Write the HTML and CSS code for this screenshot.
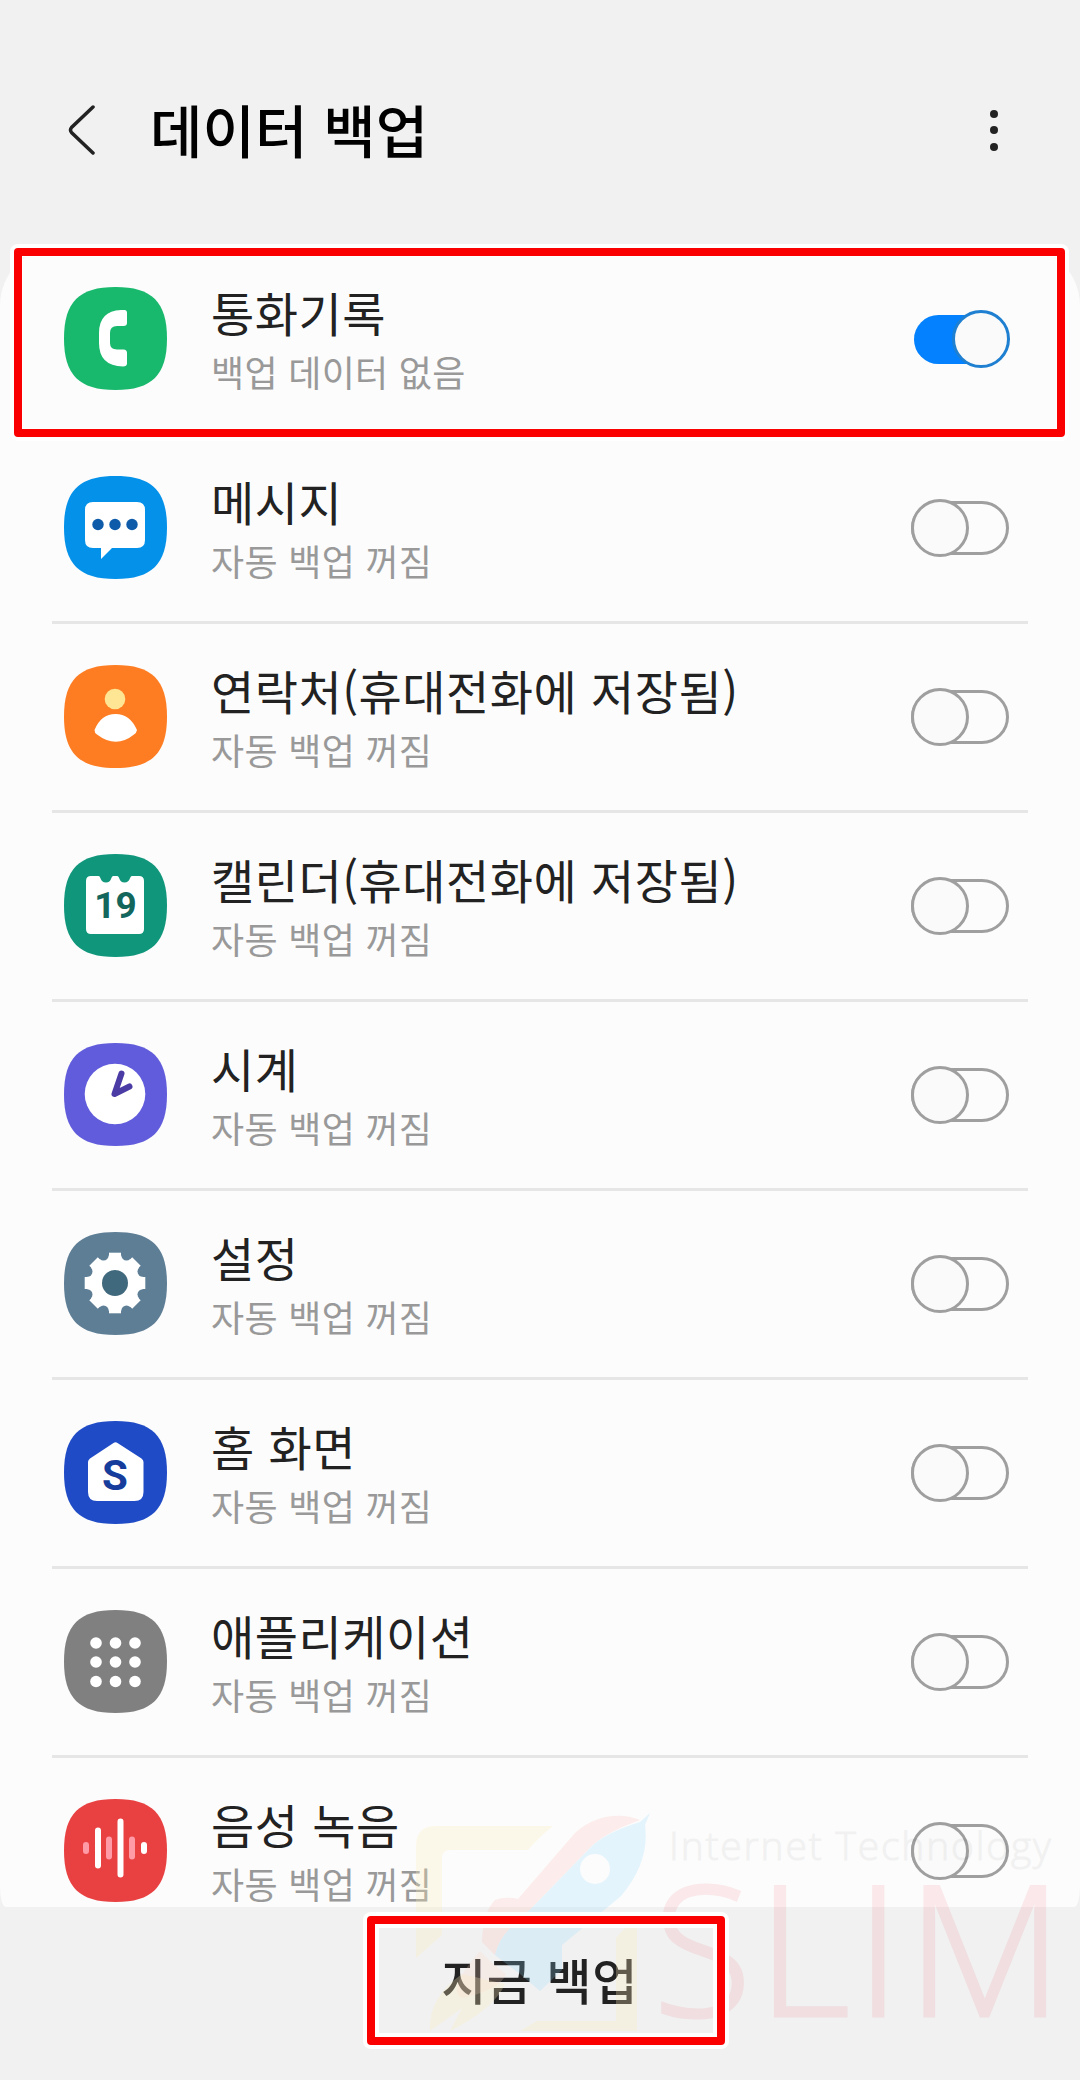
FILE: index.html
```
<!DOCTYPE html>
<html lang="ko">
<head>
  <meta charset="UTF-8" />
  <meta name="viewport" content="width=device-width, initial-scale=1.0"/>
  <title>데이터 백업</title>
  <link rel="stylesheet" href="styles.css">
</head>
<body>

  <svg class="defs" width="0" height="0">
    <symbol id="tile" viewBox="0 0 103 103"><path d="M51.5 0C88 0 103 15 103 51.5S88 103 51.5 103 0 88 0 51.5 15 0 51.5 0Z"/></symbol>
  </svg>

  <header class="header">
    <svg class="back" viewBox="0 0 28 50"><path d="M25 2L3.500 22.500Q1.500 25 3.500 27.500L25 48"/></svg>
    <h1>데이터 백업</h1>
    <div class="more"><i></i><i></i><i></i></div>
  </header>

  <main class="list">
    <div class="item marked">
      <svg class="icon" viewBox="0 0 103 103">
        <use href="#tile" fill="#18b86d"/>
        <path fill="#fff" d="M57 23H60.500Q63 23 63 26V36Q63 39 59.500 39H53Q46 39 46 46V56Q46 62.500 53 62.500H59.500Q63 62.500 63 66V76.500Q63 79.500 59 79.500Q35 79 35 56V46Q35 24 57 23Z"/>
      </svg>
      <div class="text"><div class="name">통화기록</div><div class="desc">백업 데이터 없음</div></div>
      <div class="switch on"></div>
    </div>

    <div class="item">
      <svg class="icon" viewBox="0 0 103 103">
        <use href="#tile" fill="#0391ea"/>
        <path fill="#fff" d="M29 26H73Q81 26 81 34V64Q81 72 73 72H48L37 83V72H29Q21 72 21 64V34Q21 26 29 26Z"/>
        <g fill="#0d5ba9"><circle cx="34" cy="48.500" r="5.700"/><circle cx="51" cy="48.500" r="5.700"/><circle cx="68" cy="48.500" r="5.700"/></g>
      </svg>
      <div class="text"><div class="name">메시지</div><div class="desc">자동 백업 꺼짐</div></div>
      <div class="switch"></div>
    </div>

    <div class="item">
      <svg class="icon" viewBox="0 0 103 103">
        <use href="#tile" fill="#ff7d22"/>
        <circle cx="51" cy="34" r="10.300" fill="#ffe695"/>
        <path fill="#fff" d="M30.500 65Q37 49 51.500 49T73 65Q72.500 68 70 69.500Q52 84 33 69.500Q30.500 68 30.500 65Z"/>
      </svg>
      <div class="text"><div class="name">연락처(휴대전화에 저장됨)</div><div class="desc">자동 백업 꺼짐</div></div>
      <div class="switch"></div>
    </div>

    <div class="item">
      <svg class="icon" viewBox="0 0 103 103">
        <use href="#tile" fill="#0f967b"/>
        <path fill="#fff" d="M27 22H34.500C37 22 36 28.500 42 28.500S46.500 22 49.500 22H53C56 22 54.500 28.500 60.500 28.500S65.500 22 68 22H75Q80 22 80 27V75Q80 80 75 80H27Q22 80 22 75V27Q22 22 27 22Z"/>
        <text class="day" x="51.500" y="64" text-anchor="middle">19</text>
      </svg>
      <div class="text"><div class="name">캘린더(휴대전화에 저장됨)</div><div class="desc">자동 백업 꺼짐</div></div>
      <div class="switch"></div>
    </div>

    <div class="item">
      <svg class="icon" viewBox="0 0 103 103">
        <use href="#tile" fill="#615cdb"/>
        <circle cx="51" cy="51" r="30.300" fill="#fff"/>
        <path d="M57.500 30.500L50.500 51L65.500 43.500" fill="none" stroke="#4a3ba5" stroke-width="6" stroke-linecap="round" stroke-linejoin="round"/>
      </svg>
      <div class="text"><div class="name">시계</div><div class="desc">자동 백업 꺼짐</div></div>
      <div class="switch"></div>
    </div>

    <div class="item">
      <svg class="icon" viewBox="0 0 103 103">
        <use href="#tile" fill="#5e7e96"/>
        <circle cx="51" cy="51" r="28.500" fill="#fff"/>
        <g fill="#fff"><rect x="45" y="20.700" width="12" height="60.600"/><rect x="45" y="20.700" width="12" height="60.600" transform="rotate(45 51 51)"/><rect x="45" y="20.700" width="12" height="60.600" transform="rotate(90 51 51)"/><rect x="45" y="20.700" width="12" height="60.600" transform="rotate(135 51 51)"/></g>
        <g fill="#5e7e96">
          <circle cx="62.500" cy="23.300" r="5.200"/><circle cx="78.700" cy="39.500" r="5.200"/><circle cx="78.700" cy="62.500" r="5.200"/><circle cx="62.500" cy="78.700" r="5.200"/>
          <circle cx="39.500" cy="78.700" r="5.200"/><circle cx="23.300" cy="62.500" r="5.200"/><circle cx="23.300" cy="39.500" r="5.200"/><circle cx="39.500" cy="23.300" r="5.200"/>
        </g>
        <circle cx="51" cy="51" r="13" fill="#41697d"/>
      </svg>
      <div class="text"><div class="name">설정</div><div class="desc">자동 백업 꺼짐</div></div>
      <div class="switch"></div>
    </div>

    <div class="item">
      <svg class="icon" viewBox="0 0 103 103">
        <use href="#tile" fill="#1f4bc6"/>
        <path fill="#fff" d="M49.500 22Q51.500 20.500 53.500 22L77.500 37.500Q79.500 39 79.500 41V71Q79.500 80 70.500 80H33Q24 80 24 71V41Q24 39 26 37.500Z"/>
        <text class="home" x="51" y="69" text-anchor="middle">S</text>
      </svg>
      <div class="text"><div class="name">홈 화면</div><div class="desc">자동 백업 꺼짐</div></div>
      <div class="switch"></div>
    </div>

    <div class="item">
      <svg class="icon" viewBox="0 0 103 103">
        <use href="#tile" fill="#808080"/>
        <g fill="#fff">
          <circle cx="32" cy="33" r="5.800"/><circle cx="51.500" cy="33" r="5.800"/><circle cx="71" cy="33" r="5.800"/>
          <circle cx="32" cy="52" r="5.800"/><circle cx="51.500" cy="52" r="5.800"/><circle cx="71" cy="52" r="5.800"/>
          <circle cx="32" cy="71.500" r="5.800"/><circle cx="51.500" cy="71.500" r="5.800"/><circle cx="71" cy="71.500" r="5.800"/>
        </g>
      </svg>
      <div class="text"><div class="name">애플리케이션</div><div class="desc">자동 백업 꺼짐</div></div>
      <div class="switch"></div>
    </div>

    <div class="item">
      <svg class="icon" viewBox="0 0 103 103">
        <use href="#tile" fill="#e94041"/>
        <g fill="none" stroke-width="6" stroke-linecap="round">
          <path stroke="#ff9ba7" d="M22 46V52M45 40.500V57.500M68 40.500V57.500"/>
          <path stroke="#fff" d="M34 31.500V66.500M56.500 22.500V75.500M80 46V52"/>
        </g>
      </svg>
      <div class="text"><div class="name">음성 녹음</div><div class="desc">자동 백업 꺼짐</div></div>
      <div class="switch"></div>
    </div>
  </main>

  <footer class="footer">
    <button class="backup">지금 백업</button>
  </footer>

  <svg class="watermark" viewBox="400 1790 680 250">
    <g fill="#fff0ba" opacity=".28">
      <path d="M416 1846Q416 1826 436 1826H553Q538 1838 528 1850H450Q442 1850 442 1858V1935L416 1958Z"/>
      <path d="M616 1938L637 1915V2031H520L537 2021H616Z"/>
      <path d="M505 1984Q495 2008 450 2031L462 2008L430 2031Q428 1998 462 1974Z"/>
    </g>
    <g opacity=".22">
      <path fill="#ffb8b0" d="M640 1820C620 1812 595 1815 575 1833L518 1899Q505 1896 495 1900Q483 1912 482 1942L495 1955Q500 1934 520 1920L590 1848Q604 1833 640 1820Z"/>
      <path fill="#ffd9c8" d="M480 1951Q492 1964 506 1974Q500 1990 462 1998Q446 1990 480 1951Z"/>
      <path fill="#8fdcff" fill-rule="evenodd" d="M650 1813L645 1825Q650 1862 621 1896L562 1945V1970L540 1991L520 1974L495 1955Q500 1934 520 1920L590 1848Q604 1833 640 1822ZM595 1854A15 15 0 1 0 595 1884A15 15 0 1 0 595 1854Z"/>
    </g>
    <text class="tagline" x="669" y="1860" textLength="382">Internet Technology</text>
    <text class="brand" x="653" y="2016" textLength="410">SLIM</text>
  </svg>

</body>
</html>
```
FILE: styles.css
```
*,
*::after {
  box-sizing: border-box;
}
body {
  position: relative;
  width: 1080px;
  height: 2080px;
  margin: 0;
  overflow: hidden;
  font-family: 'Noto Sans CJK KR', sans-serif;
  background-color: #f1f1f1;
  color: #222;
}
.defs {
  position: absolute;
}
.header {
  display: flex;
  align-items: center;
  height: 246px;
  padding: 14px 80px 0 68px;
}
.back {
  width: 28px;
  height: 50px;
  fill: none;
  stroke: #222;
  stroke-width: 3.5;
  stroke-linecap: round;
}
h1 {
  flex: 1;
  margin: 0 0 5px 54px;
  font-size: 57px;
  font-weight: 500;
  line-height: 80px;
  color: #000;
}
.more {
  display: grid;
  gap: 8.5px;
  width: 10px;
}
.more i {
  width: 8px;
  height: 8px;
  border-radius: 50%;
  background-color: #222;
}
.list {
  height: 1661px;
  border-radius: 60px 60px 6px 6px / 60px 60px 20px 20px;
  background-color: #fcfcfc;
}
.item {
  display: flex;
  align-items: center;
  height: 189px;
  margin: 0 52px;
  padding: 0 19px 0 12px;
  border-bottom: 3px solid #e6e6e6;
}
.item:last-child {
  border-color: transparent;
}
.icon {
  width: 103px;
  height: 103px;
  margin-bottom: 1px;
}
.day {
  font: bold 37px Roboto, sans-serif;
  fill: #12665c;
}
.home {
  font: bold 42px Roboto, sans-serif;
  fill: #163d9b;
}
.text {
  flex: 1;
  margin-left: 44px;
}
.name {
  font-size: 47px;
  line-height: 62px;
  letter-spacing: 0.5px;
}
.desc {
  padding-top: 1px;
  font-size: 36px;
  line-height: 54px;
  letter-spacing: 0.3px;
  color: #999;
}
.switch {
  position: relative;
  width: 98px;
  height: 54px;
  border: 3px solid #9f9f9f;
  border-radius: 27px;
}
.switch::after {
  content: '';
  position: absolute;
  top: -5px;
  left: -3px;
  width: 58px;
  height: 58px;
  border: 3px solid #9f9f9f;
  border-radius: 50%;
  background-color: #fafafa;
}
.switch.on {
  width: 95px;
  height: 49px;
  border: 0;
  background-color: #0381fe;
}
.switch.on::after {
  left: 38px;
  border-color: #1f7fd0;
}

/* 강조 테두리 */
.marked {
  position: relative;
  border-color: transparent;
}
.marked::after,
.backup::after {
  content: '';
  position: absolute;
  z-index: 1;
  border: 8px solid #fb0000;
  border-radius: 4px;
  box-shadow: 0 0 0 4px #fff, inset 0 0 0 1px #fff;
}
.marked::after {
  top: 2px;
  left: -38px;
  width: 1051px;
  height: 189px;
}
.footer {
  display: flex;
  justify-content: center;
  padding-top: 9px;
}
.backup {
  position: relative;
  width: 358px;
  height: 129px;
  margin-left: 11px;
  padding: 0 12px 4px 0;
  border: 0;
  background: none;
  font: 500 49px 'Noto Sans CJK KR', sans-serif;
  letter-spacing: 0.5px;
  color: #222;
}
.backup::after {
  inset: 0;
  box-shadow: 0 0 0 4px #fff, inset 0 0 0 4px #fff;
}
.watermark {
  position: absolute;
  top: 1790px;
  left: 400px;
  width: 680px;
  height: 250px;
  overflow: visible;
}
.tagline {
  font: 300 39px 'Open Sans', sans-serif;
  fill: #000;
  stroke: #000;
  stroke-width: 1;
  opacity: 0.04;
}
.brand {
  font: 300 181px 'Open Sans', sans-serif;
  fill: #f02840;
  stroke: #f02840;
  stroke-width: 3;
  opacity: 0.09;
}
```
